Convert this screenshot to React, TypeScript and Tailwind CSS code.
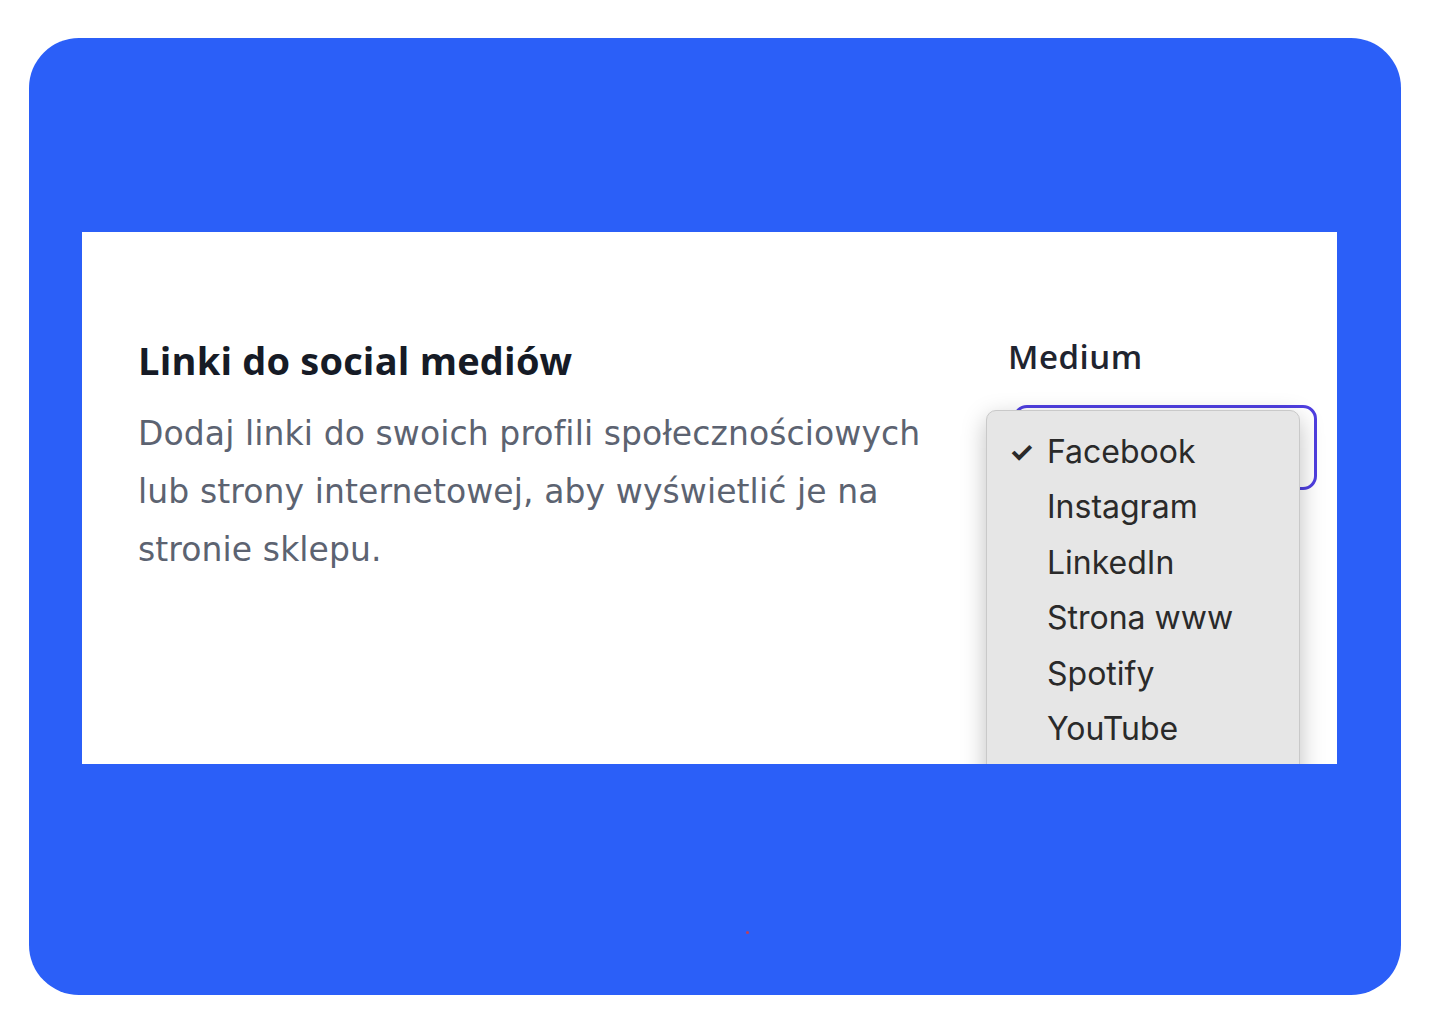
import React from "react";

export default function App() {
  const items = ["Facebook", "Instagram", "LinkedIn", "Strona www", "Spotify", "YouTube"];
  return (
    <div className="w-[1440px] h-[1024px] bg-white pt-[38px] pl-[29px]">
      <div className="relative w-[1372px] h-[957px] rounded-[50px] bg-[#2b5ff8] pt-[194px] pl-[53px]">
        <div className="w-[1255px] h-[532px] bg-white overflow-hidden flex pl-[56px] pt-[100px]">
          <div className="w-[875px] shrink-0 flex flex-col">
            <h2
              className="text-[38px] leading-[56px] font-bold text-[#161b26] tracking-[0.2px]"
              style={{ fontFamily: "'Open Sans', sans-serif" }}
            >
              Linki do social mediów
            </h2>
            <p
              className="mt-[17px] text-[33px] leading-[58px] text-[#5c6371] tracking-[0.1px] whitespace-nowrap"
              style={{ fontFamily: "'DejaVu Sans', sans-serif" }}
            >
              Dodaj linki do swoich profili społecznościowych
              <br />
              lub strony internetowej, aby wyświetlić je na
              <br />
              stronie sklepu.
            </p>
          </div>
          <div className="relative flex flex-col">
            <div
              className="text-[33px] leading-[50px] font-semibold text-[#1f2430] ml-[-5px] tracking-[0.5px]"
              style={{ fontFamily: "'Open Sans', sans-serif" }}
            >
              Medium
            </div>
            <div className="mt-[23px] w-[304px] h-[85px] rounded-[14px] border-[3px] border-[#4f3fe0] bg-white" />
            <div
              className="absolute left-[-27px] top-[78px] w-[314px] h-[400px] rounded-[10px] bg-[#e6e6e6] border border-[#c9c9c9] shadow-[0_8px_24px_rgba(0,0,0,0.25)] pt-[13px]"
              style={{ fontFamily: "Inter, 'Liberation Sans', sans-serif" }}
            >
              {items.map((it, i) => (
                <div key={it} className="flex items-center h-[55.5px] text-[32px] text-[#2a2a2a]">
                  <span className="w-[60px] pl-[22px] text-[28px] font-bold">{i === 0 ? "✓" : ""}</span>
                  <span>{it}</span>
                </div>
              ))}
            </div>
          </div>
        </div>
        <div className="absolute left-[717px] top-[893px] w-[3px] h-[3px] rounded-full bg-[#c0405a]" />
      </div>
    </div>
  );
}
